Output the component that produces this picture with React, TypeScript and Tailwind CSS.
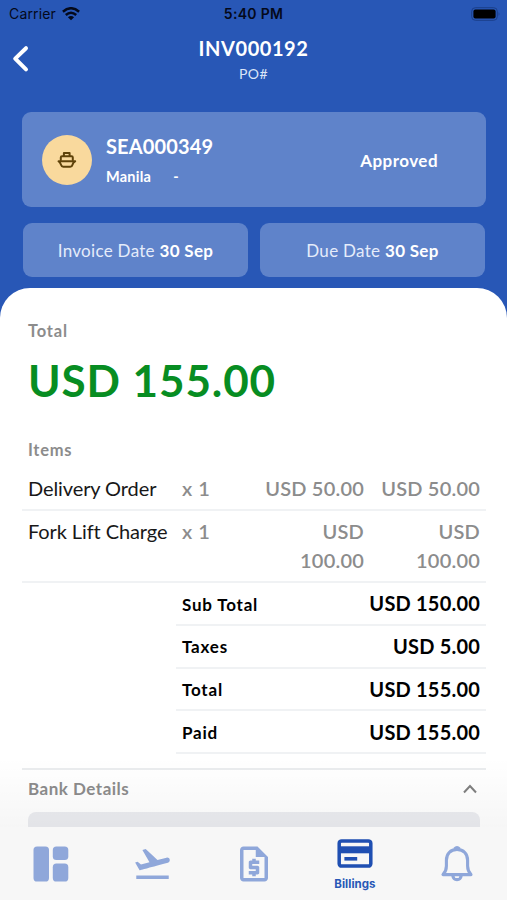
import { MdFlightTakeoff, MdOutlineRequestQuote } from 'react-icons/md'

type LineItem = { name: string; qty: number; unit: string; amount: string; tall?: boolean }

const items: LineItem[] = [
  { name: 'Delivery Order', qty: 1, unit: 'USD 50.00', amount: 'USD 50.00' },
  { name: 'Fork Lift Charge', qty: 1, unit: 'USD 100.00', amount: 'USD 100.00', tall: true },
]

const totals = [
  { label: 'Sub Total', value: 'USD 150.00' },
  { label: 'Taxes', value: 'USD 5.00' },
  { label: 'Total', value: 'USD 155.00' },
  { label: 'Paid', value: 'USD 155.00' },
]

const WifiIcon = () => (
  <svg viewBox="0 0 18 14" className="h-3.5 w-[18px]" fill="none" stroke="#04091a" strokeWidth="2.5">
    <path d="M0.9 4.7 Q9 -2.2 17.1 4.7" />
    <path d="M3.8 8 Q9 3.4 14.2 8" />
    <path d="M9 13.3 L5.9 10.2 Q9 7.6 12.1 10.2 Z" fill="#04091a" stroke="none" />
  </svg>
)

const BatteryIcon = () => (
  <svg viewBox="0 0 30 14" className="h-3.5 w-[30px]">
    <rect x="0.7" y="0.7" width="25.6" height="12.6" rx="3.6" fill="none" stroke="#1b3f8a" strokeWidth="1" />
    <rect x="2.4" y="2.4" width="22.2" height="9.2" rx="2" fill="#000" />
    <path d="M27.6 5 Q29.4 7 27.6 9 Z" fill="#1b3f8a" />
  </svg>
)

const ShipIcon = () => (
  <svg
    viewBox="0 0 20 18"
    className="mt-px h-[18px] w-5"
    fill="none"
    stroke="#5f4209"
    strokeWidth="2"
    strokeLinejoin="round"
    strokeLinecap="round"
  >
    <path d="M6.9 4.8 V2 H12.6 V4.8" />
    <path d="M3.8 9 V6.4 Q3.8 5.2 5 5.2 H14.6 Q15.8 5.2 15.8 6.4 V9" />
    <path d="M1.5 10.2 H18.2 C16.7 10.8 15.9 12.2 15.5 13.8 Q15 15.8 13.2 15.8 H6.3 Q4.6 15.8 4 13.8 C3.5 12.2 2.8 11 1.5 10.2 Z" />
  </svg>
)

const DashboardIcon = () => (
  <svg viewBox="0 0 36 36" className="h-9 w-9" fill="#8fa7da">
    <rect x="0.5" y="0.5" width="15.5" height="35" rx="3.6" />
    <rect x="19.8" y="0.5" width="15.5" height="13.6" rx="3.6" />
    <rect x="19.8" y="17.6" width="15.5" height="17.9" rx="3.6" />
  </svg>
)

const CardIcon = () => (
  <svg viewBox="0 0 36 29" className="ml-px h-[29px] w-9">
    <rect x="2.2" y="1.9" width="31.6" height="25.2" rx="2.4" fill="none" stroke="#1f4fb2" strokeWidth="3.5" />
    <rect x="2.2" y="7.3" width="31.6" height="7" fill="#1f4fb2" />
    <rect x="7.4" y="18" width="12.8" height="3.6" fill="#1f4fb2" />
  </svg>
)

const BellIcon = () => (
  <svg viewBox="0 0 34 36" className="ml-0.5 h-9 w-[34px]" fill="none" stroke="#8fa7da" strokeWidth="3.1" strokeLinejoin="round">
    <path d="M17 3.4 C10.4 3.4 6.4 8 6.4 14.2 V20 C6.4 24.5 5.2 26.3 3 28.6 H31 C28.8 26.3 27.6 24.5 27.6 20 V14.2 C27.6 8 23.6 3.4 17 3.4 Z" />
    <path d="M12.8 29.6 C13.5 35 20.5 35 21.2 29.6" />
    <path d="M14.6 2.9 Q17 0.6 19.4 2.9" />
  </svg>
)

const StatusBar = () => (
  <div className="flex h-7 shrink-0 items-center justify-between pr-[6px] pl-[9px] font-['Inter',sans-serif] text-[#04091a]">
    <div className="flex w-40 items-center gap-[6px]">
      <span className="text-[14px] leading-5 tracking-[0.15px]">Carrier</span>
      <WifiIcon />
    </div>
    <span className="mr-[3px] text-[14px] leading-5 font-semibold tracking-[0.3px]">5:40 PM</span>
    <div className="flex w-40 justify-end">
      <BatteryIcon />
    </div>
  </div>
)

const DateCard = ({ label, date }: { label: string; date: string }) => (
  <div className="flex h-[54px] flex-1 items-center justify-center rounded-[9px] bg-[#5f83ca] pt-0.5 text-[17px] tracking-[0.3px] text-[#e5ecfa]">
    <span>
      {label} <span className="font-bold text-white">{date}</span>
    </span>
  </div>
)

const App = () => {
  return (
    <div className="flex h-[900px] w-[507px] flex-col overflow-hidden bg-[#2857b6] font-['Lato',sans-serif]">
      <StatusBar />

      <header className="flex h-[84px] shrink-0 items-start">
        <div className="w-12 pt-[17px] pl-[12px]">
          <svg viewBox="0 0 17 28" className="h-7 w-[17px]" fill="none" stroke="#fff" strokeWidth="4" strokeLinecap="round" strokeLinejoin="round">
            <path d="M14 3.2 L3.2 13.6 L14 24.4" />
          </svg>
        </div>
        <div className="flex-1 pt-[7px] text-center text-white">
          <h1 className="text-[20px] leading-[27px] font-bold tracking-[0.55px]">INV000192</h1>
          <p className="pt-px text-[14px] leading-[22px] tracking-[0.4px] text-[#dbe5f8]">PO#</p>
        </div>
        <div className="w-12" />
      </header>

      <section className="mr-[21px] ml-[22px] flex h-[95px] shrink-0 items-center rounded-[9px] bg-[#5f83ca] pr-12 pl-5 text-white">
        <div className="flex h-[50px] w-[50px] items-center justify-center rounded-full bg-[#f9d99d]">
          <ShipIcon />
        </div>
        <div className="ml-[14px] flex-1 pt-0.5">
          <p className="text-[20px] leading-[30px] font-bold tracking-[0.15px]">SEA000349</p>
          <p className="flex gap-[22px] pt-0.5 text-[14.5px] leading-[28px] font-bold tracking-[0.25px]">
            <span>Manila</span>
            <span>-</span>
          </p>
        </div>
        <span className="pt-0.5 text-[17px] font-bold tracking-[0.45px]">Approved</span>
      </section>

      <div className="mr-[22px] ml-[23px] mt-4 flex shrink-0 gap-3">
        <DateCard label="Invoice Date" date="30 Sep" />
        <DateCard label="Due Date" date="30 Sep" />
      </div>

      <main className="relative mt-[11px] min-h-0 flex-1 overflow-hidden rounded-t-[30px] bg-white pr-[21px] pl-[22px]">
        <div className="px-1.5 pt-[31px]">
          <p className="text-[16.5px] leading-6 font-bold tracking-[0.8px] text-[#8c8c8c]">Total</p>
          <p className="mt-[10px] text-[44px] leading-[54px] font-bold tracking-[0.9px] text-[#078d22]">USD 155.00</p>
          <p className="mt-[31px] text-[16.5px] leading-6 font-bold tracking-[0.7px] text-[#8c8c8c]">Items</p>
        </div>

        <div className="mt-[6px]">
          {items.map((item) => (
            <div
              key={item.name}
              className={`flex border-b-2 border-[#f0f2f4] px-1.5 pt-[6px] text-[20px] leading-[29px] ${item.tall ? 'h-[72px]' : 'h-[43px]'}`}
            >
              <span className="w-[154px] tracking-[-0.1px] whitespace-nowrap text-[#181818]">{item.name}</span>
              <span className="w-[66px] font-semibold tracking-[0.5px] text-[#8c8c8c]">x {item.qty}</span>
              <span className="w-[116px] pl-3 text-right font-semibold tracking-[0.2px] text-[#8c8c8c]">{item.unit}</span>
              <span className="w-[116px] pl-3 text-right font-semibold tracking-[0.2px] text-[#8c8c8c]">{item.amount}</span>
            </div>
          ))}
        </div>

        <div className="ml-[154px]">
          {totals.map((row) => (
            <div key={row.label} className="flex h-[42.75px] items-center justify-between border-b-2 border-[#f0f2f4] px-1.5 text-black">
              <span className="pt-0.5 text-[17px] font-bold tracking-[0.8px]">{row.label}</span>
              <span className="text-[20px] font-bold tracking-[0.2px]">{row.value}</span>
            </div>
          ))}
        </div>

        <div className="mt-[14px] border-t-2 border-[#eaecee] px-1.5">
          <div className="flex h-[42px] items-center justify-between pb-[5px] text-[#8c8c8c]">
            <span className="text-[17px] font-bold tracking-[0.5px]">Bank Details</span>
            <svg viewBox="0 0 14 10" className="mr-[3px] h-2.5 w-3.5" fill="none" stroke="#808080" strokeWidth="2">
              <path d="M1 8.5 L7 2 L13 8.5" />
            </svg>
          </div>
          <div className="h-10 rounded-t-[8px] bg-[#ebecf0]" />
        </div>
        <div className="pointer-events-none absolute inset-x-0 bottom-0 h-[70px] bg-gradient-to-b from-black/0 to-black/[0.035]" />
      </main>

      <nav className="flex h-[73px] shrink-0 bg-[#f7f7f7] text-[#8fa7da]">
        <div className="flex flex-1 items-center justify-center">
          <DashboardIcon />
        </div>
        <div className="flex flex-1 items-center justify-center">
          <MdFlightTakeoff size={41} />
        </div>
        <div className="flex flex-1 items-center justify-center">
          <MdOutlineRequestQuote size={42} />
        </div>
        <div className="flex flex-1 flex-col items-center pt-[12px]">
          <CardIcon />
          <span className="mt-[9px] font-['Inter',sans-serif] text-[11.5px] leading-[14px] font-bold tracking-[0.05px] text-[#2857b6]">
            Billings
          </span>
        </div>
        <div className="flex flex-1 items-center justify-center">
          <BellIcon />
        </div>
      </nav>
    </div>
  )
}

export default App
